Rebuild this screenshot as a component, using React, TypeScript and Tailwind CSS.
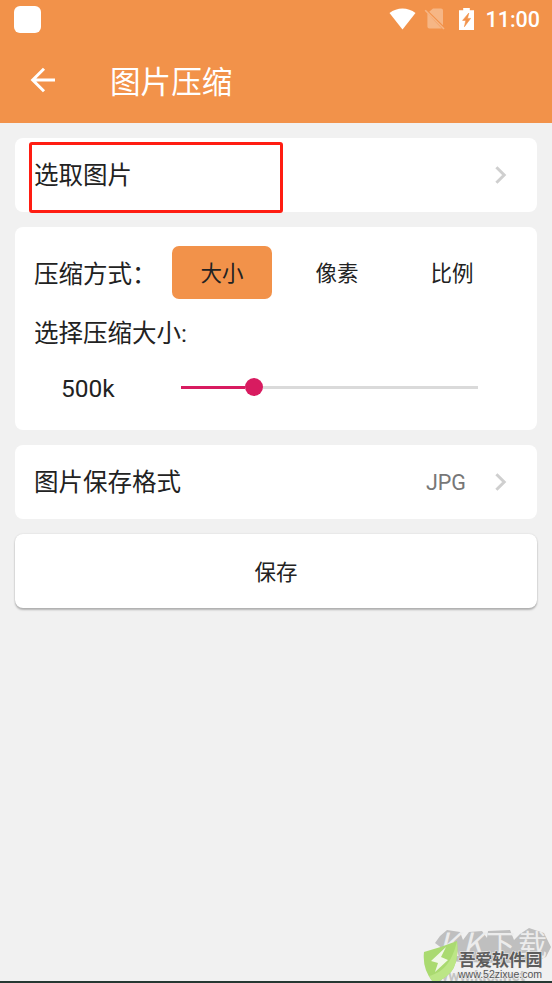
import type { ReactNode } from "react";

function Chevron() {
  return (
    <svg width="14" height="20" viewBox="0 0 14 20" fill="none" className="shrink-0">
      <path d="M2.4 2.2 L10.2 10 L2.4 17.8" stroke="#cfcfcf" strokeWidth="3" />
    </svg>
  );
}

function StatusBar() {
  return (
    <div className="flex h-[38px] items-center pl-[14px] pr-[12px]">
      <div className="size-[27px] rounded-[6px] bg-white" />
      <svg width="27" height="22" viewBox="0 0 27 22" className="ml-auto">
        <path d="M0.5 5 C8 -1 19 -1 26.5 5 L13.5 21.4 Z" fill="#fff" />
      </svg>
      <svg width="22" height="22" viewBox="0 0 22 22" className="ml-[8px]">
        <path d="M9 0.5 H17 Q19 0.5 19 2.5 V17.2 L5.2 3.8 Z M3.4 5.6 L17.8 20.6 H5.4 Q3.4 20.6 3.4 18.6 Z" fill="#fff" fillOpacity="0.33" />
        <path d="M1.2 2.2 L20 21" stroke="#fff" strokeOpacity="0.33" strokeWidth="1.6" />
      </svg>
      <svg width="15" height="22" viewBox="0 0 15 22" className="ml-[13px]">
        <path d="M4.2 0 H10.8 V2.2 H15 V22 H0 V2.2 H4.2 Z" fill="#fff" />
        <path d="M9.8 5 L3.6 12.4 H6.8 L5.4 18.8 L11.6 10.4 H8.5 Z" fill="#f2924a" stroke="#f2924a" strokeWidth="0.6" />
      </svg>
      <span className="ml-[11px] pt-[2px] text-[21.5px] leading-[36px] font-medium text-white">11:00</span>
    </div>
  );
}

function Card({ children, className = "" }: { children: ReactNode; className?: string }) {
  return <section className={`rounded-[8px] bg-white ${className}`}>{children}</section>;
}

function Watermark() {
  return (
    <div className="absolute right-0 bottom-[-2px] h-[59px] w-[130px] overflow-hidden">
      <svg width="130" height="59" viewBox="0 -4 130 59">
        <path d="M18 8 L25 2 L38 4 L41 12 L47 4 L60 3 L65 10 L66 3 L88 2 L92 12 L98 6 L107 0 L122 5 L129 19 L124 29 L110 35 L74 35 L18 33 L21 21 L13 15 Z" fill="#bfbfbf" />
        <g fontFamily="'Noto Sans CJK SC', sans-serif" fill="#ececec">
          <text x="16" y="28" fontSize="32" fontStyle="italic">K</text>
          <text x="40" y="28" fontSize="32" fontStyle="italic">K</text>
          <text x="64" y="28" fontSize="29">下</text>
          <text x="96" y="28" fontSize="29">载</text>
        </g>
        <text x="15" y="53" fontFamily="Roboto, sans-serif" fontSize="15" fontWeight="700" fill="#c4c4c4" textLength="88" lengthAdjust="spacingAndGlyphs">www.kkx.net</text>
        <path d="M2 24 Q20 19 35 13 Q37 34 29 44 Q22 52 12 55 Q0 42 2 24 Z" fill="#aada70" />
        <path d="M35 13 Q37 34 29 44 Q22 52 12 55 Q9 52 7 48 C23 44 31 31 35 13 Z" fill="#bce686" />
        <path d="M24 19 L9 33 L16 35 L13 44 L26 32 L19 29 Z" fill="#f1f8e8" />
        <text x="36.5" y="38" fontFamily="'Noto Sans CJK SC', sans-serif" fontSize="17" fontWeight="700" fill="#5d5d5d" stroke="#ededed" strokeWidth="1.2" paintOrder="stroke" textLength="84">吾爱软件园</text>
        <text x="36" y="49.5" fontFamily="'Liberation Sans', sans-serif" fontSize="11.5" fill="#555" stroke="#ededed" strokeWidth="1.2" paintOrder="stroke" textLength="84" lengthAdjust="spacingAndGlyphs">www.52zixue.com</text>
      </svg>
    </div>
  );
}

const modes = ["大小", "像素", "比例"];

export default function App() {
  return (
    <div className="relative flex h-[983px] w-[552px] flex-col overflow-hidden border-b-2 border-[#263832] bg-[#f1f1f1] font-['Roboto','Noto_Sans_CJK_SC',sans-serif] text-[#222]">
      <header className="h-[123px] shrink-0 bg-[#f2924a] text-white">
        <StatusBar />
        <div className="flex h-[83px] items-center pl-[30px]">
          <svg width="26" height="26" viewBox="0 0 26 26" fill="none" stroke="#fff" strokeWidth="3">
            <path d="M25 13 H3 M14 1.7 L2.7 13 L14 24.3" />
          </svg>
          <h1 className="ml-[54px] pt-[6px] text-[30.6px] leading-[40px] font-normal">图片压缩</h1>
        </div>
      </header>

      <main className="flex flex-col gap-[15px] px-[15px] pt-[15px]">
        <Card className="relative flex h-[74px] items-center justify-between pr-[29px] pl-[19px]">
          <span className="pt-[2px] text-[24.5px] leading-[36px]">选取图片</span>
          <Chevron />
          <div className="absolute top-[4px] left-[14px] h-[71px] w-[254px] rounded-[3px] border-3 border-[#ff1d12]" />
        </Card>

        <Card className="h-[203px] px-[19px] pt-[19px]">
          <div className="flex h-[53px] items-center">
            <span className="w-[138px] pt-[4px] text-[24.5px] leading-[36px]">压缩方式：</span>
            <div className="flex gap-[15px] text-[21.5px]">
              {modes.map((mode, i) => (
                <button
                  key={mode}
                  className={`h-[53px] w-[100px] rounded-[7px] pt-[3px] ${i === 0 ? "bg-[#f2924a]" : ""}`}
                >
                  {mode}
                </button>
              ))}
            </div>
          </div>
          <div className="mt-[17px] text-[24.5px] leading-[36px]">选择压缩大小:</div>
          <div className="mt-[17px] flex h-[36px] items-center">
            <span className="w-[147px] pt-[4px] pl-[27px] text-[24.5px]">500k</span>
            <div className="flex h-[22px] w-[297px] items-center">
              <div className="h-[3px] w-[64px] bg-[#d81b60]" />
              <div className="size-[18px] rounded-full bg-[#d81b60]" />
              <div className="h-[3px] flex-1 bg-[#dadada]" />
            </div>
          </div>
        </Card>

        <Card className="flex h-[74px] items-center pr-[29px] pl-[19px]">
          <span className="pt-[2px] text-[24.5px] leading-[36px]">图片保存格式</span>
          <span className="mr-[28px] ml-auto pt-[3px] text-[21.5px] text-[#777]">JPG</span>
          <Chevron />
        </Card>

        <button className="h-[74px] rounded-[8px] bg-white pt-[4px] text-[21.5px] shadow-[0_2px_2px_rgba(0,0,0,0.25),0_0_2px_rgba(0,0,0,0.12)]">
          保存
        </button>
      </main>

      <Watermark />
    </div>
  );
}
